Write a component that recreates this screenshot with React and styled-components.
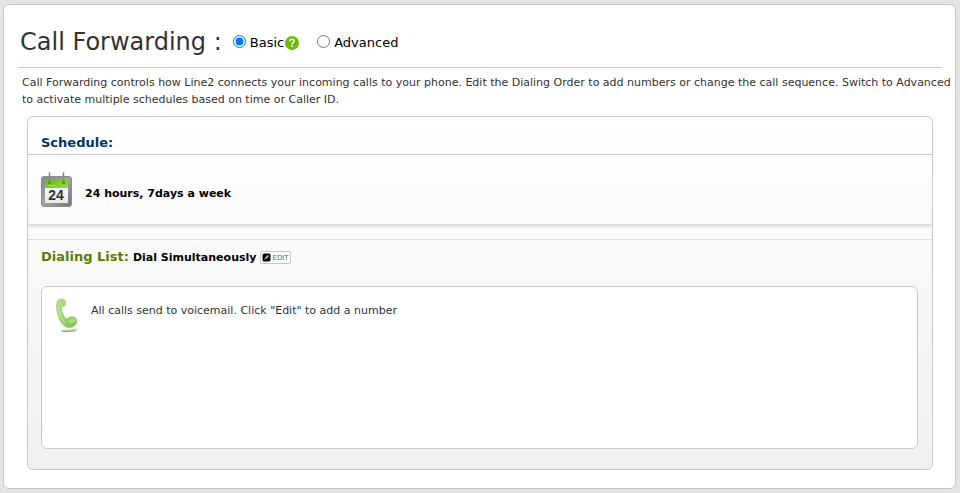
import React, { useState } from "react";
import styled, { createGlobalStyle } from "styled-components";

const GlobalStyle = createGlobalStyle`
  * {
    box-sizing: border-box;
  }
  body {
    margin: 0;
    background: #e4e4e4;
    color: #333;
    font-family: Verdana, "DejaVu Sans", sans-serif;
    font-size: 11px;
  }
`;

const Page = styled.main`
  padding: 4px 4px 4px 3px;
`;

const Card = styled.section`
  padding: 13px 13px 18px 14px;
  background: #fff;
  border: 1px solid #c8c8c8;
  border-radius: 6px;
`;

const Header = styled.header`
  display: flex;
  align-items: center;
  height: 50px;
  padding: 0 2px;
  border-bottom: 1px solid #c8c8c8;
`;

const Title = styled.h1`
  margin: 0 11px 0 0;
  padding-bottom: 2px;
  font-size: 24px;
  font-weight: 400;
  line-height: 46px;
`;

const ModeOption = styled.div`
  display: flex;
  align-items: center;
  margin-right: 18px;
`;

const Radio = styled.input`
  width: 13px;
  height: 13px;
  margin: 0 4px 2px 0;
`;

const RadioLabel = styled.label`
  color: #000;
  font-size: 13px;
  line-height: 18px;
`;

const HelpButton = styled.button`
  display: flex;
  margin: 0 0 0 1px;
  padding: 0;
  background: none;
  border: 0;
  cursor: pointer;
`;

const Intro = styled.p`
  margin: 0 -12px 0 0;
  padding: 6px 0 8px 4px;
  line-height: 17px;
`;

const Panel = styled.div`
  margin: 0 9px;
  background: linear-gradient(#fff, #f1f1f1);
  border: 1px solid #c8c8c8;
  border-radius: 6px;
`;

const ScheduleHeading = styled.h2`
  margin: 0;
  padding: 17px 13px 2px;
  border-bottom: 1px solid #c8c8c8;
  color: #003366;
  font-size: 13px;
  line-height: 18px;
`;

const ScheduleRow = styled.div`
  display: flex;
  align-items: center;
  gap: 13px;
  height: 69px;
  padding: 0 13px;
  background: linear-gradient(#fefefe, #fbfbfb);
  box-shadow: 0 2px 3px rgba(0, 0, 0, 0.17);
  clip-path: inset(0 0 -6px 0);
  color: #000;
  font-weight: 700;
`;

const ScheduleText = styled.span`
  padding-top: 8px;
`;

const DialingSection = styled.section`
  margin-top: 15px;
  padding: 6px 14px 20px 13px;
  border-top: 1px dotted #c8c8c8;
`;

const DialingHeader = styled.div`
  display: flex;
  align-items: center;
  gap: 4px;
  height: 22px;
  margin-bottom: 18px;
`;

const DialingTitle = styled.h2`
  margin: 0;
  padding-bottom: 2px;
  color: #5a7d0a;
  font-size: 13px;
`;

const DialingMode = styled.strong`
  color: #000;
`;

const EditButton = styled.button`
  display: flex;
  align-items: center;
  gap: 1px;
  height: 13px;
  padding: 0 1px;
  background: #fff;
  border: 1px solid #c8c8c8;
  border-radius: 2px;
  color: #666;
  font-family: inherit;
  font-size: 7px;
  line-height: 11px;
  cursor: pointer;
`;

const EditLabel = styled.span`
  padding-top: 2px;
`;

const NumberList = styled.div`
  display: flex;
  align-items: flex-start;
  gap: 10px;
  min-height: 163px;
  padding: 10px 12px;
  background: #fff;
  border: 1px solid #c8c8c8;
  border-radius: 6px;
`;

const EmptyMessage = styled.p`
  margin: 5px 0 0;
  line-height: 17px;
`;

function HelpIcon() {
  return (
    <svg width="14" height="14" viewBox="0 0 14 14" aria-hidden="true">
      <circle cx="7" cy="7" r="7" fill="#6db80f" />
      <path
        d="M4.9 5.2C5 3.9 5.9 3.3 7 3.3s2.1.7 2.1 1.8C9.1 6.4 7.1 6.6 7.1 8.4"
        fill="none"
        stroke="#fff"
        strokeWidth="1.5"
      />
      <rect x="6.3" y="9.4" width="1.6" height="1.6" fill="#fff" />
    </svg>
  );
}

function CalendarIcon() {
  return (
    <svg width="31" height="36" viewBox="0 0 31 36" role="img" aria-label="Calendar">
      <defs>
        <linearGradient id="calFrame" x1="0" y1="0" x2="1" y2="1">
          <stop offset="0" stopColor="#85888b" />
          <stop offset="0.5" stopColor="#a2a4a6" />
          <stop offset="1" stopColor="#737678" />
        </linearGradient>
        <linearGradient id="calGreen" x1="0" y1="0" x2="1" y2="1">
          <stop offset="0" stopColor="#66b51a" />
          <stop offset="1" stopColor="#97dc3c" />
        </linearGradient>
        <linearGradient id="calPaper" x1="0" y1="0" x2="0" y2="1">
          <stop offset="0" stopColor="#fff" />
          <stop offset="1" stopColor="#eaeaea" />
        </linearGradient>
      </defs>
      <rect x="0.5" y="4.5" width="30" height="30" rx="2.5" fill="url(#calFrame)" stroke="#8a8c8e" />
      <rect x="4" y="7" width="23" height="24" rx="1" fill="url(#calPaper)" />
      <path d="M4 7h23v9H4z" fill="url(#calGreen)" />
      <path d="M8 13.5h7" stroke="#a6dc62" />
      <circle cx="8.5" cy="10.5" r="1.5" fill="#4a8714" />
      <circle cx="22.5" cy="10.5" r="1.5" fill="#4a8714" />
      <path
        d="M8.5 1v9M22.5 1v9"
        stroke="#85897f"
        strokeWidth="1.6"
        strokeLinecap="round"
      />
      <text
        x="15"
        y="28"
        textAnchor="middle"
        fill="#333"
        fontFamily="Liberation Sans, sans-serif"
        fontSize="14"
        fontWeight="700"
      >
        24
      </text>
    </svg>
  );
}

function PencilIcon() {
  return (
    <svg width="9" height="9" viewBox="0 0 9 9" aria-hidden="true">
      <rect x="0.5" y="0.5" width="8" height="8" rx="1.5" fill="#080808" />
      <path d="M3.3 5.7L6.3 2.7" stroke="#bbb" strokeWidth="1.8" />
      <path d="M2 7L3 6" stroke="#777" />
    </svg>
  );
}

function PhoneIcon() {
  return (
    <svg width="27" height="37" viewBox="0 0 27 37" role="img" aria-label="Phone">
      <defs>
        <linearGradient id="phoneGreen" x1="0" y1="0" x2="1" y2="1">
          <stop offset="0" stopColor="#b5e08c" />
          <stop offset="0.5" stopColor="#9cd46d" />
          <stop offset="1" stopColor="#80be50" />
        </linearGradient>
      </defs>
      <path d="M7 34c5-1 10 0 16-1.500" fill="none" stroke="#b5d79d" strokeWidth="2" />
      <path d="M9 34.800c4-.5 8-.3 12-.8" fill="none" stroke="#79ad58" />
      <path
        d="M3 5C3.500 2.500 6 1.500 8.500 2c3 .6 4 3.500 2.700 6C10.200 9.800 8 9.500 7.500 10.500 7 13.500 9 18.500 12 21.500c1 .8 1.500-.2 3-1 3-1.500 6.500-.8 7.500 2 .8 2.800-.5 6-4 7.500-4 1.600-8 .3-11-4C4 21 1.500 11 3 5z"
        fill="url(#phoneGreen)"
        stroke="#91c765"
        strokeWidth="0.6"
      />
      <ellipse cx="8.300" cy="5.300" rx="2" ry="2.500" fill="#a9da80" transform="rotate(25 8 5)" />
      <ellipse cx="18" cy="24" rx="3.500" ry="2" fill="#acdb85" transform="rotate(-15 18 24)" />
      <path d="M4.300 9c.3 6 2.400 12.500 6.500 16.500" fill="none" stroke="#c9ebad" />
    </svg>
  );
}

function ModeRadio({ id, label, mode, onSelect, children }) {
  return (
    <ModeOption>
      <Radio
        type="radio"
        name="mode"
        id={id}
        checked={mode === id}
        onChange={() => onSelect(id)}
      />
      <RadioLabel htmlFor={id}>{label}</RadioLabel>
      {children}
    </ModeOption>
  );
}

function App() {
  const [mode, setMode] = useState("basic");

  return (
    <Page>
      <GlobalStyle />
      <Card>
        <Header>
          <Title>Call Forwarding :</Title>
          <ModeRadio id="basic" label="Basic" mode={mode} onSelect={setMode}>
            <HelpButton type="button" aria-label="Help">
              <HelpIcon />
            </HelpButton>
          </ModeRadio>
          <ModeRadio id="advanced" label="Advanced" mode={mode} onSelect={setMode} />
        </Header>
        <Intro>
          Call Forwarding controls how Line2 connects your incoming calls to your
          phone. Edit the Dialing Order to add numbers or change the call sequence.
          Switch to Advanced to activate multiple schedules based on time or Caller
          ID.
        </Intro>
        <Panel>
          <ScheduleHeading>Schedule:</ScheduleHeading>
          <ScheduleRow>
            <CalendarIcon />
            <ScheduleText>24 hours, 7days a week</ScheduleText>
          </ScheduleRow>
          <DialingSection>
            <DialingHeader>
              <DialingTitle>Dialing List:</DialingTitle>
              <DialingMode>Dial Simultaneously</DialingMode>
              <EditButton type="button">
                <PencilIcon />
                <EditLabel>EDIT</EditLabel>
              </EditButton>
            </DialingHeader>
            <NumberList>
              <PhoneIcon />
              <EmptyMessage>
                All calls send to voicemail. Click "Edit" to add a number
              </EmptyMessage>
            </NumberList>
          </DialingSection>
        </Panel>
      </Card>
    </Page>
  );
}

export default App;
